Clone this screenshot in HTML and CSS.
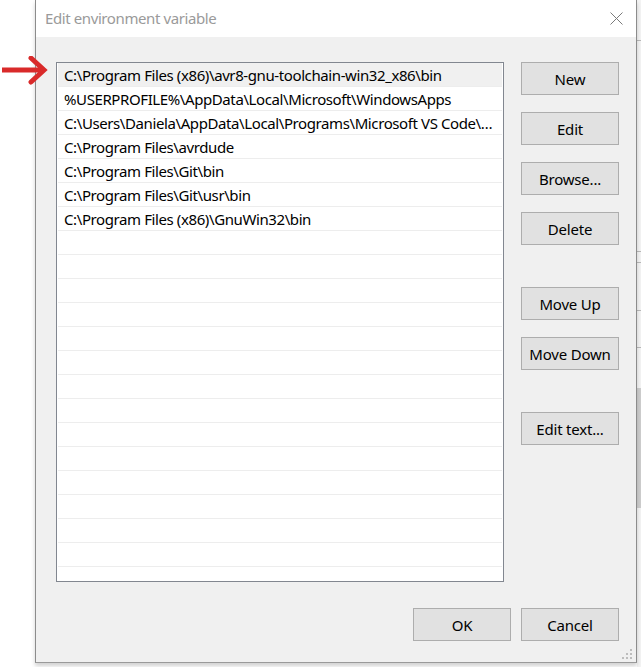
FILE: index.html
```html
<!DOCTYPE html>
<html>
<head>
<meta charset="utf-8">
<link rel="stylesheet" href="styles.css">
</head>
<body>
<div class="screen">
  <div class="gutter"></div>
  <div class="dialog">
    <div class="titlebar">
      <span class="title">Edit environment variable</span>
      <svg class="close" width="13" height="13" viewBox="0 0 13 13"><path d="M0.5 0.5 L12.5 12.5 M12.5 0.5 L0.5 12.5" stroke="#7a7a7a" stroke-width="1" fill="none"/></svg>
    </div>
    <div class="body">
      <div class="main">
        <div class="list">
          <div class="row selected">C:\Program Files (x86)\avr8-gnu-toolchain-win32_x86\bin</div>
          <div class="row">%USERPROFILE%\AppData\Local\Microsoft\WindowsApps</div>
          <div class="row">C:\Users\Daniela\AppData\Local\Programs\Microsoft VS Code\…</div>
          <div class="row">C:\Program Files\avrdude</div>
          <div class="row">C:\Program Files\Git\bin</div>
          <div class="row">C:\Program Files\Git\usr\bin</div>
          <div class="row">C:\Program Files (x86)\GnuWin32\bin</div>
          <div class="row"></div><div class="row"></div><div class="row"></div>
          <div class="row"></div><div class="row"></div><div class="row"></div>
          <div class="row"></div><div class="row"></div><div class="row"></div>
          <div class="row"></div><div class="row"></div><div class="row"></div>
          <div class="row"></div><div class="row"></div><div class="row"></div>
        </div>
        <div class="buttons">
          <button class="btn">New</button>
          <button class="btn">Edit</button>
          <button class="btn">Browse...</button>
          <button class="btn">Delete</button>
          <button class="btn group">Move Up</button>
          <button class="btn">Move Down</button>
          <button class="btn group">Edit text...</button>
        </div>
      </div>
      <div class="footer">
        <button class="btn">OK</button>
        <button class="btn">Cancel</button>
      </div>
      <svg class="grip" width="12" height="12" viewBox="0 0 12 12">
        <g fill="#bdbdbd">
          <rect x="9" y="1" width="2" height="2"/>
          <rect x="5" y="5" width="2" height="2"/><rect x="9" y="5" width="2" height="2"/>
          <rect x="1" y="9" width="2" height="2"/><rect x="5" y="9" width="2" height="2"/><rect x="9" y="9" width="2" height="2"/>
        </g>
      </svg>
    </div>
  </div>
  <div class="behind">
    <div class="seg s1"></div>
    <div class="seg s2"></div>
    <div class="seg s3"></div>
    <div class="seg s4"></div>
    <div class="seg s5"></div>
    <div class="seg scroll"></div>
  </div>
</div>
<svg class="arrow" width="50" height="30" viewBox="0 0 50 30">
  <path d="M2 14 L42 14" stroke="#d92a2a" stroke-width="5" fill="none"/>
  <path d="M31 2 L44 14 L31 26" stroke="#d92a2a" stroke-width="5" fill="none" stroke-linejoin="miter" stroke-linecap="round"/>
</svg>
</body>
</html>
```
FILE: styles.css
```css
html, body {
  margin: 0;
  padding: 0;
}
body {
  width: 641px;
  height: 667px;
  overflow: hidden;
  background: #ffffff;
  font-family: "Noto Sans", "Open Sans", sans-serif;
  font-size: 15px;
  color: #000;
  position: relative;
}
.screen {
  display: flex;
  height: 667px;
}
.gutter {
  width: 35px;
  flex: none;
}
.dialog {
  width: 600px;
  height: 662px;
  flex: none;
  display: flex;
  flex-direction: column;
  border-left: 1px solid #8c8c8c;
  border-right: 1px solid #8c8c8c;
  border-bottom: 1px solid #9a9a9a;
  box-shadow: 0 3px 4px rgba(0,0,0,0.18);
  position: relative;
  z-index: 1;
}
.titlebar {
  height: 37px;
  background: #ffffff;
  display: flex;
  align-items: center;
  justify-content: space-between;
  padding: 0 13px 0 9px;
  flex: none;
}
.title {
  color: #9a9a9a;
  font-size: 15px;
  letter-spacing: -0.4px;
  margin-top: -1px;
}
.close {
  display: block;
  margin-top: -1px;
}
.body {
  flex: 1;
  background: #f0f0f0;
  padding: 25px 17px 0 20px;
  position: relative;
}
.main {
  display: flex;
  gap: 17px;
  align-items: flex-start;
}
.list {
  width: 446px;
  height: 518px;
  border: 1px solid #828790;
  background: #ffffff;
  overflow: hidden;
  padding-left: 1px;
}
.row {
  height: 24px;
  line-height: 25px;
  border-bottom: 1px solid #ededed;
  box-sizing: border-box;
  padding-left: 6px;
  white-space: nowrap;
  overflow: hidden;
  width: 444px;
  letter-spacing: -0.4px;
}
.row.selected {
  background: #f0f0f0;
}
.buttons {
  display: flex;
  flex-direction: column;
  gap: 17px;
}
.btn {
  width: 98px;
  height: 33px;
  background: #e1e1e1;
  border: 1px solid #adadad;
  font-family: inherit;
  font-size: 15px;
  letter-spacing: -0.2px;
  color: #000;
  padding: 0;
  margin: 0;
}
.btn.group {
  margin-top: 25px;
}
.footer {
  display: flex;
  justify-content: flex-end;
  gap: 10px;
  margin-top: 26px;
}
.grip {
  position: absolute;
  right: 3px;
  bottom: 2px;
}
.behind {
  flex: 1;
  display: flex;
  flex-direction: column;
  background: #f3f3f3;
}
.seg {
  border-bottom: 1px solid #b9b9b9;
}
.s1 { height: 40px; }
.s2 { height: 210px; }
.s3 { height: 10px; }
.s4 { height: 47px; }
.s5 { height: 36px; }
.scroll {
  height: 120px;
  background: #cdcdcd;
  border: none;
  margin-top: 40px;
}
.arrow {
  position: absolute;
  left: 0;
  top: 56px;
  z-index: 2;
}
```
